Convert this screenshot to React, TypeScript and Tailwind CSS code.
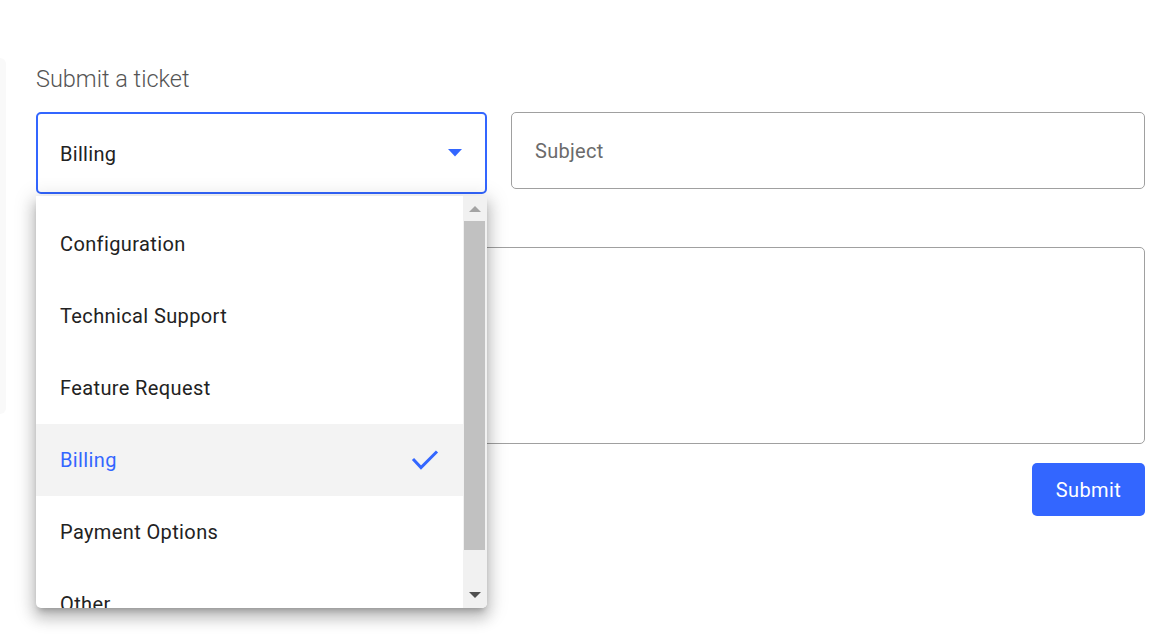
import React from "react";

const items = [
  "Configuration",
  "Technical Support",
  "Feature Request",
  "Billing",
  "Payment Options",
  "Other",
];

export default function App() {
  return (
    <div
      className="w-[1168px] h-[642px] bg-white overflow-hidden flex"
      style={{ fontFamily: "Roboto, 'Liberation Sans', sans-serif" }}
    >
      <div className="w-[6px] mt-[58px] h-[356px] bg-[#f9f9f9] rounded-r-[8px] shrink-0" />
      <div className="ml-[30px] w-[1109px] pt-[64px] relative">
        <h1 className="text-[23.5px] leading-[30px] font-light text-[#555555]">
          Submit a ticket
        </h1>
        <div className="mt-[18px] flex gap-[24px] items-start">
          <div className="w-[451px] h-[82px] border-2 border-[#3366ff] rounded-[5px] flex items-center pl-[22px] pr-[22px] justify-between">
            <span className="text-[20px] tracking-[0.3px] text-[#222222] mt-[2px]">Billing</span>
            <svg width="14" height="8" viewBox="0 0 14 8" className="mr-[1px]">
              <path d="M0 0 L14 0 L7 7.5 Z" fill="#3366ff" />
            </svg>
          </div>
          <div className="flex-1 h-[77px] border border-[#a0a0a0] rounded-[5px] flex items-center pl-[23px]">
            <span className="text-[20px] tracking-[0.3px] text-[#6b6b6b]">Subject</span>
          </div>
        </div>
        <div className="mt-[53px] h-[197px] border border-[#a0a0a0] rounded-[5px]" />
        <div className="mt-[19px] flex justify-end">
          <button className="w-[113px] h-[53px] bg-[#3366ff] text-white text-[20px] tracking-[0.4px] rounded-[5px]">
            Submit
          </button>
        </div>

        <div className="absolute left-0 top-[196px] w-[451px] h-[412px] bg-white rounded-b-[5px] overflow-hidden flex shadow-[0_5px_6px_-3px_rgba(0,0,0,0.25),0_9px_14px_2px_rgba(0,0,0,0.16),0_4px_20px_4px_rgba(0,0,0,0.13)]">
          <div className="flex-1 pt-[12px]">
            {items.map((it) => {
              const sel = it === "Billing";
              return (
                <div
                  key={it}
                  className={`h-[72px] flex items-center justify-between pl-[24px] pr-[24px] ${
                    sel ? "bg-[#f3f3f3]" : ""
                  }`}
                >
                  <span
                    className={`text-[20px] tracking-[0.38px] ${sel ? "text-[#3366ff]" : "text-[#222222]"}`}
                  >
                    {it}
                  </span>
                  {sel && (
                    <svg width="28" height="22" viewBox="0 0 28 22">
                      <path
                        d="M2 10 L10 18.5 L26 2.5"
                        stroke="#3366ff"
                        strokeWidth="3"
                        fill="none"
                      />
                    </svg>
                  )}
                </div>
              );
            })}
          </div>
          <div className="w-[24px] bg-[#f1f1f1] flex flex-col items-center">
            <div className="h-[25px] w-full flex items-center justify-center">
              <svg width="12" height="6" viewBox="0 0 12 6">
                <path d="M0 6 L12 6 L6 0 Z" fill="#a3a3a3" />
              </svg>
            </div>
            <div className="w-[21px] h-[329px] bg-[#c1c1c1] mr-[2px]" />
            <div className="flex-1 w-full flex items-end justify-center pb-[10px]">
              <svg width="12" height="6" viewBox="0 0 12 6">
                <path d="M0 0 L12 0 L6 6 Z" fill="#505050" />
              </svg>
            </div>
          </div>
        </div>
      </div>
    </div>
  );
}
